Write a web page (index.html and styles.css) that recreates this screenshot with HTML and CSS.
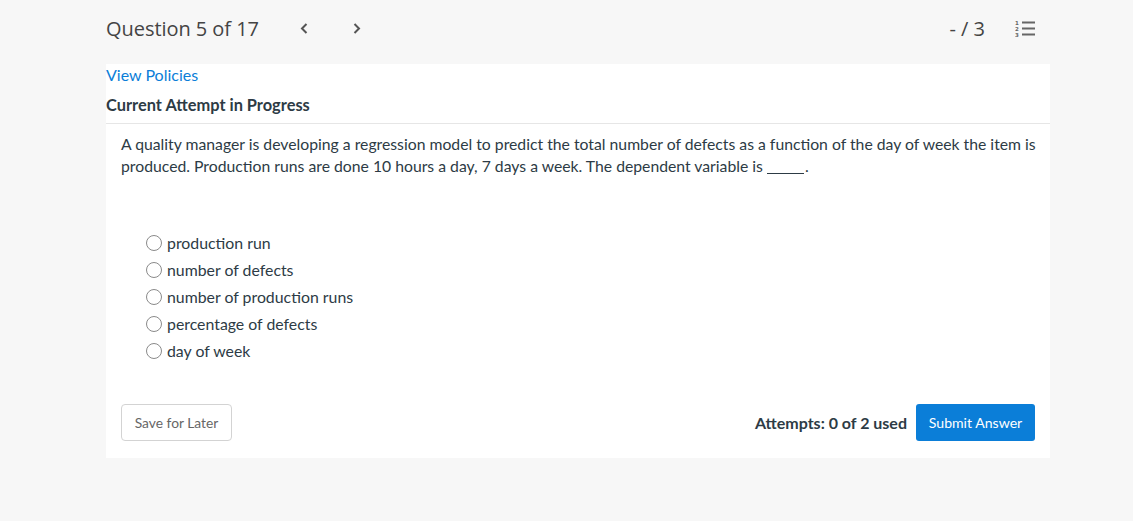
FILE: index.html
```html
<!DOCTYPE html>
<html lang="en">
<head>
<meta charset="utf-8">
<title>Question 5 of 17</title>
<link rel="stylesheet" href="styles.css">
</head>
<body>
<div class="page">
  <header class="topbar">
    <div class="title">Question 5 of 17</div>
    <div class="nav">
      <span class="chev">
        <svg width="8" height="11" viewBox="0 0 8 11"><path d="M6.5 1 L2 5.5 L6.5 10" fill="none" stroke="#555" stroke-width="2"/></svg>
      </span>
      <span class="chev">
        <svg width="8" height="11" viewBox="0 0 8 11"><path d="M1.5 1 L6 5.5 L1.5 10" fill="none" stroke="#555" stroke-width="2"/></svg>
      </span>
    </div>
    <div class="spacer"></div>
    <div class="score">- / 3</div>
    <div class="listicon">
      <svg width="20" height="17" viewBox="0 0 20 17">
        <text x="0" y="4.5" class="num">1</text>
        <text x="0" y="10.5" class="num">2</text>
        <text x="0" y="16.5" class="num">3</text>
        <rect x="7" y="1.5" width="13" height="2" fill="#666"/>
        <rect x="7" y="7.5" width="13" height="2" fill="#666"/>
        <rect x="7" y="13.5" width="13" height="2" fill="#666"/>
      </svg>
    </div>
  </header>

  <main class="card">
    <a class="policies" href="#">View Policies</a>
    <div class="attempt">Current Attempt in Progress</div>
    <div class="question">
      <p class="qtext">A quality manager is developing a regression model to predict the total number of defects as a function of the day of week the item is produced. Production runs are done 10 hours a day, 7 days a week. The dependent variable is <span class="blank"></span>.</p>
      <div class="options">
        <label class="opt"><span class="radio"></span>production run</label>
        <label class="opt"><span class="radio"></span>number of defects</label>
        <label class="opt"><span class="radio"></span>number of production runs</label>
        <label class="opt"><span class="radio"></span>percentage of defects</label>
        <label class="opt"><span class="radio"></span>day of week</label>
      </div>
      <div class="actions">
        <button class="btn-save">Save for Later</button>
        <div class="right">
          <span class="attempts">Attempts: 0 of 2 used</span>
          <button class="btn-submit">Submit Answer</button>
        </div>
      </div>
    </div>
  </main>
</div>
</body>
</html>
```

FILE: styles.css
```css
html, body {
  margin: 0;
  padding: 0;
  background: #f7f7f7;
}
body {
  font-family: Lato, "Open Sans", sans-serif;
  color: #2d3b45;
  height: 521px;
  overflow: hidden;
}
.page {
  margin-left: 106px;
  width: 944px;
}
.topbar {
  height: 64px;
  display: flex;
  align-items: center;
  padding-right: 15px;
  box-sizing: border-box;
  padding-bottom: 8px;
}
.title {
  font-family: "Open Sans", sans-serif;
  font-size: 20px;
  color: #444;
  letter-spacing: -0.05px;
}
.nav {
  display: flex;
  margin-left: 41px;
  gap: 45px;
}
.chev {
  display: flex;
  width: 8px;
  height: 11px;
}
.spacer { flex: 1; }
.score {
  font-family: "Open Sans", sans-serif;
  font-size: 20px;
  color: #444;
  margin-right: 30px;
}
.listicon {
  display: flex;
  width: 20px;
  height: 17px;
}
.num {
  font-family: "DejaVu Sans", sans-serif;
  font-size: 5.5px;
  font-weight: 700;
  fill: #666;
}
.card {
  background: #fff;
  height: 394px;
  display: flex;
  flex-direction: column;
}
.policies {
  font-size: 16px;
  line-height: 22px;
  color: #0b7ed8;
  text-decoration: none;
  align-self: flex-start;
}
.attempt {
  font-size: 16.4px;
  font-weight: 700;
  line-height: 22px;
  margin-top: 8px;
  padding-bottom: 7px;
  border-bottom: 1px solid #e6e6e6;
}
.question {
  padding: 0 15px;
}
.qtext {
  margin: 9px -8px 0 0;
  font-size: 15.75px;
  line-height: 22px;
  color: #2d3b45;
}
.blank {
  display: inline-block;
  width: 37px;
  height: 1px;
  border-bottom: 1px solid #2d3b45;
  vertical-align: -2px;
  margin-right: 1px;
}
.options {
  margin-top: 52px;
  padding-left: 25px;
  display: flex;
  flex-direction: column;
}
.opt {
  display: flex;
  align-items: center;
  height: 27px;
  font-size: 15.85px;
  color: #2d3b45;
}
.radio {
  width: 14px;
  height: 14px;
  border: 1px solid #8a8a8a;
  border-radius: 50%;
  margin-right: 5px;
  box-sizing: content-box;
}
.actions {
  margin-top: 40px;
  display: flex;
  justify-content: space-between;
  align-items: center;
}
.btn-save {
  width: 111px;
  height: 37px;
  background: #fff;
  border: 1px solid #d3d3d3;
  border-radius: 4px;
  font-family: Lato, sans-serif;
  font-size: 13.8px;
  color: #666;
  padding: 0;
}
.right {
  display: flex;
  align-items: center;
  gap: 9px;
}
.attempts {
  font-size: 16px;
  font-weight: 700;
  color: #2d3b45;
}
.btn-submit {
  width: 119px;
  height: 37px;
  background: #0b7ed8;
  color: #fff;
  border: none;
  border-radius: 3px;
  font-family: Lato, sans-serif;
  font-size: 14.1px;
  padding: 0;
}
```
